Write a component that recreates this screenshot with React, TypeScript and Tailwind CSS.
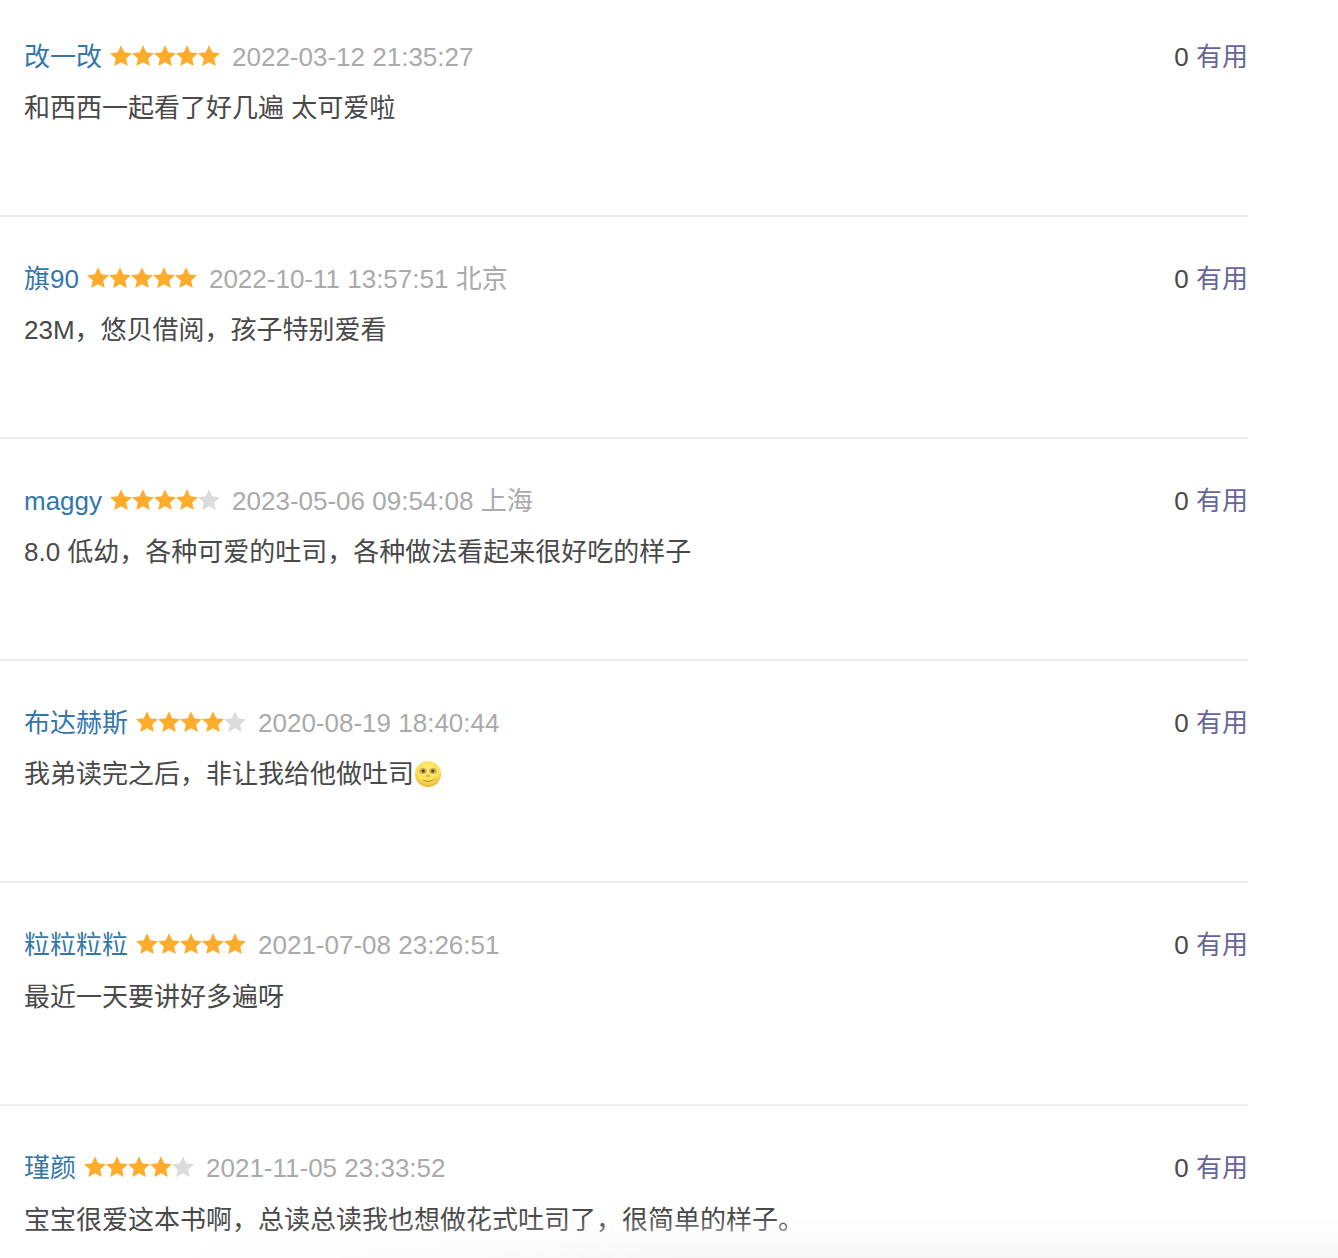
import React from "react";

const Star = ({ on }: { on: boolean }) => (
  <svg width="22" height="22" viewBox="0 0 22 22" className="block shrink-0">
    <path
      d="M11 .2L14.23 7.25 21.94 8.15 16.23 13.4 17.76 21 11 17.2 4.24 21 5.77 13.4 .06 8.15 7.77 7.25z"
      fill={on ? "#ffac2d" : "#dcdcdc"}
    />
  </svg>
);

const Moon = () => (
  <svg width="28" height="28" viewBox="0 0 28 28" className="inline-block align-[-5px]">
    <defs>
      <radialGradient id="moon" cx="50%" cy="35%" r="68%">
        <stop offset="0%" stopColor="#fff07a" />
        <stop offset="65%" stopColor="#fbdf55" />
        <stop offset="100%" stopColor="#e8a92e" />
      </radialGradient>
    </defs>
    <circle cx="14" cy="14" r="13" fill="url(#moon)" />
    <ellipse cx="9" cy="11" rx="3.8" ry="3" fill="#cfae4a" />
    <ellipse cx="19" cy="11" rx="3.8" ry="3" fill="#cfae4a" />
    <circle cx="9.2" cy="11" r="1.6" fill="#4a4026" />
    <circle cx="18.8" cy="11" r="1.6" fill="#4a4026" />
    <ellipse cx="14" cy="16" rx="2.2" ry="1.4" fill="#e0b945" />
    <path d="M9 20q5 3 10 0" stroke="#c4963a" strokeWidth="1.4" fill="none" />
    <ellipse cx="21" cy="19" rx="2" ry="1.6" fill="#e9c34f" />
  </svg>
);

const reviews = [
  { name: "改一改", stars: 5, date: "2022-03-12 21:35:27", text: "和西西一起看了好几遍 太可爱啦", box: "h-[217px] border-b-2 pt-[31px]", gap: "" },
  { name: "旗90", stars: 5, date: "2022-10-11 13:57:51 北京", text: "23M，悠贝借阅，孩子特别爱看", box: "h-[222px] border-b-2 pt-[36px]", gap: "" },
  { name: "maggy", stars: 4, date: "2023-05-06 09:54:08 上海", text: "8.0 低幼，各种可爱的吐司，各种做法看起来很好吃的样子", box: "h-[222px] border-b-2 pt-[36px]", gap: "" },
  { name: "布达赫斯", stars: 4, date: "2020-08-19 18:40:44", text: "我弟读完之后，非让我给他做吐司", moon: true, box: "h-[222px] border-b-2 pt-[36px]", gap: "" },
  { name: "粒粒粒粒", stars: 5, date: "2021-07-08 23:26:51", text: "最近一天要讲好多遍呀", box: "h-[223px] border-b-2 pt-[36px]", gap: "mt-px" },
  { name: "瑾颜", stars: 4, date: "2021-11-05 23:33:52", text: "宝宝很爱这本书啊，总读总读我也想做花式吐司了，很简单的样子。", box: "h-[152px] pt-[36px]", gap: "mt-px" },
];

export default function App() {
  return (
    <div className="relative h-[1258px] w-full overflow-hidden bg-white font-['Liberation_Sans','Noto_Sans_CJK_SC',sans-serif] text-[26px] text-[#494949]">
      <div className="w-[1248px]">
        {reviews.map((r, i) => (
          <div key={i} className={`${r.box} border-[#eeeeee] pl-6`}>
            <div className="flex h-[52px] items-center justify-between leading-[52px]">
              <div className="flex items-center">
                <span className="text-[#3377aa]">{r.name}</span>
                <span className="mb-[2px] ml-2 flex">
                  {[0, 1, 2, 3, 4].map((s) => (
                    <Star key={s} on={s < r.stars} />
                  ))}
                </span>
                <span className="ml-3 text-[#aaaaaa]">{r.date}</span>
              </div>
              <div>
                0 <span className="text-[#666699]">有用</span>
              </div>
            </div>
            <p className={`${r.gap} leading-[50px]`}>
              {r.text}
              {r.moon && <Moon />}
            </p>
          </div>
        ))}
      </div>
      <div className="pointer-events-none absolute inset-x-0 bottom-0 h-[40px] bg-gradient-to-b from-transparent to-[#f7f7f7] [mask-image:linear-gradient(to_right,transparent_170px,black_700px)]" />
    </div>
  );
}
